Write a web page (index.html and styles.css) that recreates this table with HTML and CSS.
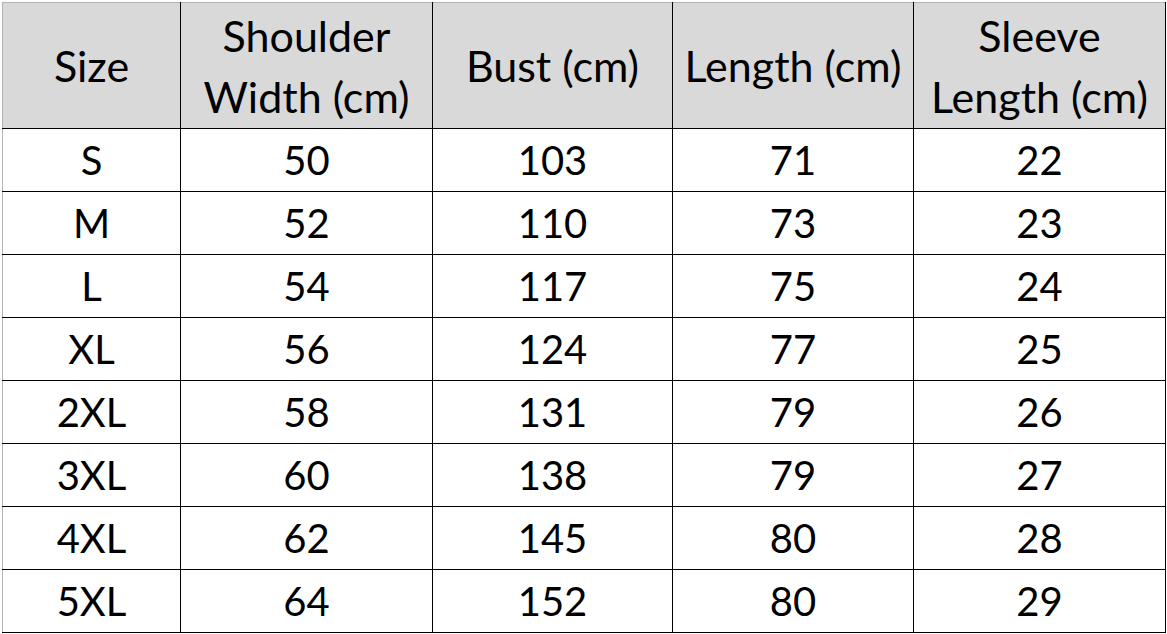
FILE: index.html
```html
<!DOCTYPE html>
<html>
<head>
<meta charset="utf-8">
<link rel="stylesheet" href="styles.css">
</head>
<body>
<table class="size-table">
  <colgroup>
    <col class="c1"><col class="c2"><col class="c3"><col class="c4"><col class="c5">
  </colgroup>
  <thead>
    <tr>
      <th>Size</th>
      <th>Shoulder<br>Width (cm)</th>
      <th>Bust (cm)</th>
      <th>Length (cm)</th>
      <th>Sleeve<br>Length (cm)</th>
    </tr>
  </thead>
  <tbody>
    <tr><td>S</td><td>50</td><td>103</td><td>71</td><td>22</td></tr>
    <tr><td>M</td><td>52</td><td>110</td><td>73</td><td>23</td></tr>
    <tr><td>L</td><td>54</td><td>117</td><td>75</td><td>24</td></tr>
    <tr><td>XL</td><td>56</td><td>124</td><td>77</td><td>25</td></tr>
    <tr><td>2XL</td><td>58</td><td>131</td><td>79</td><td>26</td></tr>
    <tr><td>3XL</td><td>60</td><td>138</td><td>79</td><td>27</td></tr>
    <tr><td>4XL</td><td>62</td><td>145</td><td>80</td><td>28</td></tr>
    <tr><td>5XL</td><td>64</td><td>152</td><td>80</td><td>29</td></tr>
  </tbody>
</table>
</body>
</html>
```
FILE: styles.css
```css
html, body {
  margin: 0;
  padding: 0;
  background: #ffffff;
}
body {
  padding: 2px 0 0 2px;
}
.size-table {
  border-collapse: collapse;
  table-layout: fixed;
  width: 1163px;
  font-family: "Lato", "Liberation Sans", sans-serif;
  color: #000;
  border-top: 1px solid #b4b4b4;
  border-left: 1px solid #b4b4b4;
  border-right: 1px solid #000;
  border-bottom: 1px solid #000;
}
.c1 { width: 178px; }
.c2 { width: 252px; }
.c3 { width: 240px; }
.c4 { width: 241px; }
.c5 { width: 252px; }
.size-table th,
.size-table td {
  border: 1px solid #000;
  text-align: center;
  vertical-align: middle;
  padding: 0;
  font-weight: normal;
  font-size: 40px;
}
.size-table thead tr th {
  border-top: 1px solid #b4b4b4;
}
.size-table tr > :first-child {
  border-left: 1px solid #b4b4b4;
}
.size-table th {
  background: #d9d9d9;
  height: 125px;
  line-height: 61px;
  font-size: 43px;
}
.size-table td {
  height: 62px;
  line-height: 62px;
}
```
